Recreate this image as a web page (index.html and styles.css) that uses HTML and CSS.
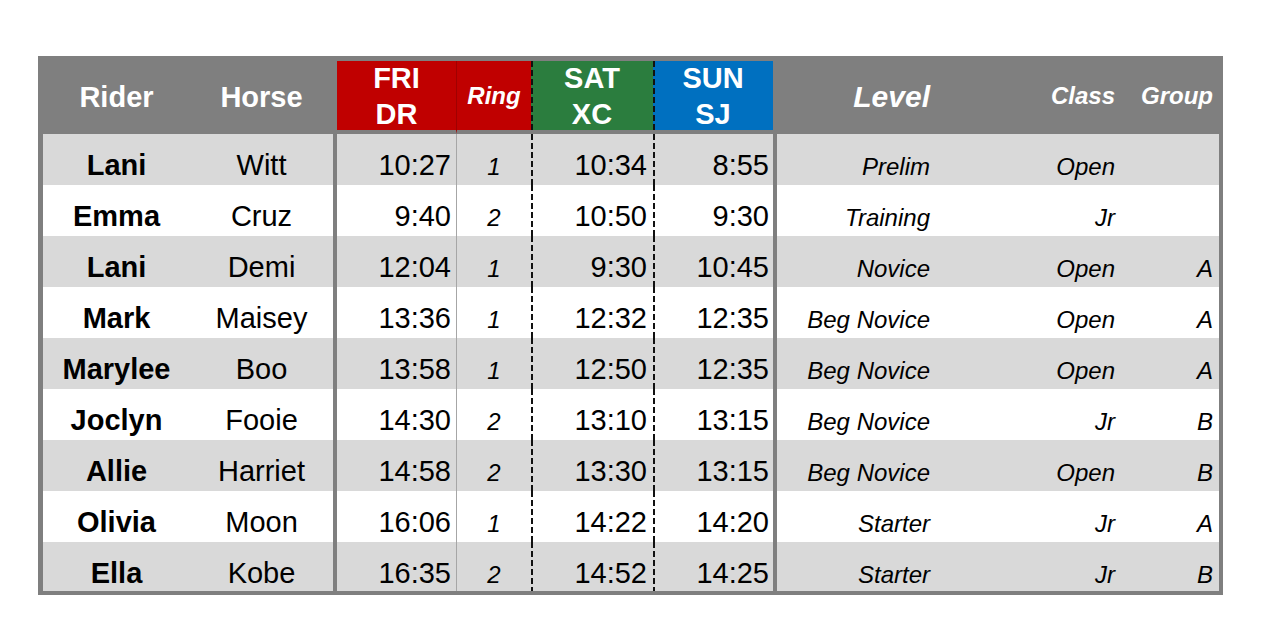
FILE: index.html
```html
<!DOCTYPE html>
<html>
<head>
<meta charset="utf-8">
<title>Schedule</title>
<link rel="stylesheet" href="styles.css">
</head>
<body>
<div class="page">
  <div class="sheet">
    <table class="sched">
      <colgroup>
        <col class="w-rider"><col class="w-horse"><col class="w-fri"><col class="w-ring"><col class="w-sat"><col class="w-sun"><col class="w-level"><col class="w-class"><col class="w-group">
      </colgroup>
      <thead>
        <tr>
          <th class="h-plain"><div class="hd hd-center hd-low">Rider</div></th>
          <th class="h-plain"><div class="hd hd-center hd-low">Horse</div></th>
          <th class="h-fri"><div class="hd hd-center">FRI<br>DR</div></th>
          <th class="h-ring"><div class="hd hd-center hd-ring">Ring</div></th>
          <th class="h-sat dash"><div class="hd hd-center">SAT<br>XC</div></th>
          <th class="h-sun dash"><div class="hd hd-center">SUN<br>SJ</div></th>
          <th class="h-level"><div class="hd hd-right hd-level">Level</div></th>
          <th class="h-plain"><div class="hd hd-right hd-small pad5">Class</div></th>
          <th class="h-plain"><div class="hd hd-right hd-small pad6">Group</div></th>
        </tr>
      </thead>
      <tbody>
        <tr class="shade"><td class="rider">Lani</td><td class="horse">Witt</td><td class="time t-fri">10:27</td><td class="ring">1</td><td class="time t-sat dash">10:34</td><td class="time t-sun dash">8:55</td><td class="lvl l-level">Prelim</td><td class="lvl l-class">Open</td><td class="lvl l-group"></td></tr>
        <tr class="plain"><td class="rider">Emma</td><td class="horse">Cruz</td><td class="time t-fri">9:40</td><td class="ring">2</td><td class="time t-sat dash">10:50</td><td class="time t-sun dash">9:30</td><td class="lvl l-level">Training</td><td class="lvl l-class">Jr</td><td class="lvl l-group"></td></tr>
        <tr class="shade"><td class="rider">Lani</td><td class="horse">Demi</td><td class="time t-fri">12:04</td><td class="ring">1</td><td class="time t-sat dash">9:30</td><td class="time t-sun dash">10:45</td><td class="lvl l-level">Novice</td><td class="lvl l-class">Open</td><td class="lvl l-group">A</td></tr>
        <tr class="plain"><td class="rider">Mark</td><td class="horse">Maisey</td><td class="time t-fri">13:36</td><td class="ring">1</td><td class="time t-sat dash">12:32</td><td class="time t-sun dash">12:35</td><td class="lvl l-level">Beg Novice</td><td class="lvl l-class">Open</td><td class="lvl l-group">A</td></tr>
        <tr class="shade"><td class="rider">Marylee</td><td class="horse">Boo</td><td class="time t-fri">13:58</td><td class="ring">1</td><td class="time t-sat dash">12:50</td><td class="time t-sun dash">12:35</td><td class="lvl l-level">Beg Novice</td><td class="lvl l-class">Open</td><td class="lvl l-group">A</td></tr>
        <tr class="plain"><td class="rider">Joclyn</td><td class="horse">Fooie</td><td class="time t-fri">14:30</td><td class="ring">2</td><td class="time t-sat dash">13:10</td><td class="time t-sun dash">13:15</td><td class="lvl l-level">Beg Novice</td><td class="lvl l-class">Jr</td><td class="lvl l-group">B</td></tr>
        <tr class="shade"><td class="rider">Allie</td><td class="horse">Harriet</td><td class="time t-fri">14:58</td><td class="ring">2</td><td class="time t-sat dash">13:30</td><td class="time t-sun dash">13:15</td><td class="lvl l-level">Beg Novice</td><td class="lvl l-class">Open</td><td class="lvl l-group">B</td></tr>
        <tr class="plain"><td class="rider">Olivia</td><td class="horse">Moon</td><td class="time t-fri">16:06</td><td class="ring">1</td><td class="time t-sat dash">14:22</td><td class="time t-sun dash">14:20</td><td class="lvl l-level">Starter</td><td class="lvl l-class">Jr</td><td class="lvl l-group">A</td></tr>
        <tr class="shade last"><td class="rider">Ella</td><td class="horse">Kobe</td><td class="time t-fri">16:35</td><td class="ring">2</td><td class="time t-sat dash">14:52</td><td class="time t-sun dash">14:25</td><td class="lvl l-level">Starter</td><td class="lvl l-class">Jr</td><td class="lvl l-group">B</td></tr>
      </tbody>
    </table>
  </div>
</div>
</body>
</html>
```

FILE: styles.css
```css
html, body {
  margin: 0;
  padding: 0;
  background: #ffffff;
}

body {
  font-family: "Liberation Sans", Arial, sans-serif;
  color: #000;
}

.page {
  padding: 56px 0 0 38px;
}

.sheet {
  width: 1176px;
  background: #7f7f7f;
  padding: 5px 4px 4px 5px;
}

.sched {
  width: 1176px;
  table-layout: fixed;
  border-collapse: separate;
  border-spacing: 0;
}

.w-rider { width: 147px; }
.w-horse { width: 143px; }
.w-fri { width: 123px; }
.w-ring { width: 75px; }
.w-sat { width: 122px; }
.w-sun { width: 120px; }
.w-level { width: 163px; }
.w-class { width: 184px; }
.w-group { width: 99px; }

/* header */
.sched th {
  padding: 0;
  border-bottom: 4px solid #7f7f7f;
  background-color: #7f7f7f;
  color: #ffffff;
  font-weight: bold;
}

.hd {
  height: 69px;
  display: flex;
  flex-direction: column;
  justify-content: center;
  line-height: 36px;
  font-size: 29px;
  font-weight: bold;
}

.hd-center { align-items: center; text-align: center; }
.hd-right { align-items: flex-end; text-align: right; }
.hd-low { padding-top: 3px; box-sizing: border-box; }

.hd-ring {
  font-size: 24px;
  font-style: italic;
  padding-top: 1px;
  box-sizing: border-box;
}

.hd-level {
  font-size: 30px;
  font-style: italic;
  padding-right: 6px;
  padding-top: 2px;
  box-sizing: border-box;
}

.hd-small {
  font-size: 24px;
  font-style: italic;
}

.pad5 { padding-right: 5px; }
.pad6 { padding-right: 6px; }

.h-fri {
  border-left: 4px solid #7f7f7f;
}
.sched th.h-fri { background-color: #c00000; }
.sched th.h-ring {
  background-color: #c00000;
  border-left: 1px solid #a00000;
}
.sched th.h-sat { background-color: #2b7d3e; }
.sched th.h-sun { background-color: #0070c0; }
.sched th.h-level { border-left: 4px solid #7f7f7f; }

.dash {
  background-image: repeating-linear-gradient(to bottom, #111 0, #111 6px, transparent 6px, transparent 9px);
  background-size: 2px 100%;
  background-repeat: no-repeat;
  background-position: left top;
}

/* body */
.sched tbody tr { height: 51px; }
.sched tbody tr.last { height: 48px; }

.sched tr.shade td { background-color: #d9d9d9; }
.sched tr.plain td { background-color: #ffffff; }

.sched td {
  padding: 15px 0 0 0;
  vertical-align: top;
  font-size: 29px;
  line-height: 32px;
  white-space: nowrap;
  overflow: hidden;
}

.rider {
  font-weight: bold;
  text-align: center;
}

.horse {
  text-align: center;
}

.time { text-align: right; }
.sched td.t-fri { border-left: 4px solid #7f7f7f; padding-right: 5px; }
.sched td.t-sat { padding-right: 6px; }
.sched td.t-sun { padding-right: 4px; }

.sched td.ring {
  border-left: 1px solid #a6a6a6;
  font-size: 24px;
  font-style: italic;
  text-align: center;
  line-height: 24px;
  padding-top: 21px;
}

.sched td.lvl {
  font-size: 24px;
  font-style: italic;
  text-align: right;
  padding-top: 17px;
}

.sched td.l-level { border-left: 4px solid #7f7f7f; padding-right: 6px; }
.sched td.l-class { padding-right: 5px; }
.sched td.l-group { padding-right: 6px; }
```
